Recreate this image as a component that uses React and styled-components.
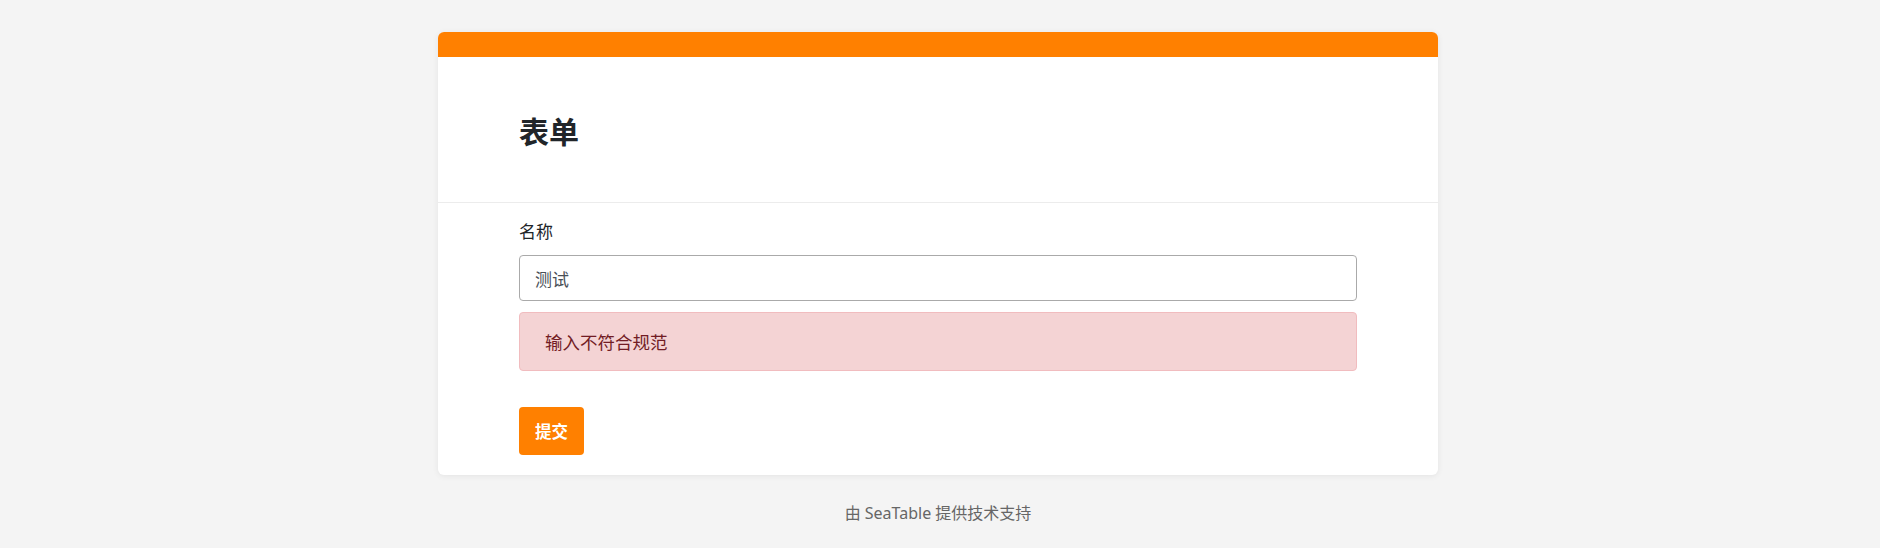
import React from "react";
import styled, { createGlobalStyle } from "styled-components";

const Global = createGlobalStyle`
  html, body { margin: 0; padding: 0; background: #f4f4f4; }
  body { font-family: "Noto Sans CJK SC", "Noto Sans", sans-serif; color: #212529; }
  * { box-sizing: border-box; }
`;

const Page = styled.div`
  display: flex;
  flex-direction: column;
  align-items: center;
  padding: 32px 4px 0 0;
`;

const Card = styled.div`
  width: 1000px;
  background: #fff;
  border-radius: 6px;
  overflow: hidden;
  box-shadow: 0 1px 6px rgba(0, 0, 0, 0.07);
`;

const TopBar = styled.div`
  height: 25px;
  background: #ff8000;
`;

const Header = styled.div`
  height: 146px;
  padding: 0 81px;
  display: flex;
  align-items: center;
  border-bottom: 1px solid #ececec;
`;

const Title = styled.h1`
  margin: 0;
  font-size: 30px;
  font-weight: 700;
  line-height: 36px;
  color: #212529;
`;

const Body = styled.div`
  padding: 16px 81px 20px;
  display: flex;
  flex-direction: column;
  align-items: stretch;
`;

const Label = styled.div`
  font-size: 17px;
  line-height: 24px;
  color: #212529;
  margin-bottom: 12px;
`;

const Input = styled.div`
  height: 46px;
  border: 1px solid #aaaaaa;
  border-radius: 4px;
  padding: 0 15px;
  display: flex;
  align-items: center;
  font-size: 17px;
  color: #495057;
`;

const Alert = styled.div`
  margin-top: 11px;
  height: 59px;
  background: #f4d3d4;
  border: 1px solid #f1bcbf;
  border-radius: 4px;
  padding: 0 25px;
  display: flex;
  align-items: center;
  font-size: 17.5px;
  color: #721c24;
`;

const Button = styled.button`
  margin-top: 36px;
  align-self: flex-start;
  height: 48px;
  padding: 0 16px;
  border: none;
  border-radius: 4px;
  background: #ff8000;
  color: #fff;
  font-family: inherit;
  font-size: 16.5px;
  font-weight: 700;
  cursor: pointer;
`;

const Footer = styled.div`
  margin-top: 27px;
  font-size: 16px;
  line-height: 22px;
  color: #666;
  font-family: "Noto Sans", "Noto Sans CJK SC", sans-serif;
`;

export default function App() {
  return (
    <>
      <Global />
      <Page>
        <Card>
          <TopBar />
          <Header>
            <Title>表单</Title>
          </Header>
          <Body>
            <Label>名称</Label>
            <Input>测试</Input>
            <Alert>输入不符合规范</Alert>
            <Button>提交</Button>
          </Body>
        </Card>
        <Footer>由 SeaTable 提供技术支持</Footer>
      </Page>
    </>
  );
}
